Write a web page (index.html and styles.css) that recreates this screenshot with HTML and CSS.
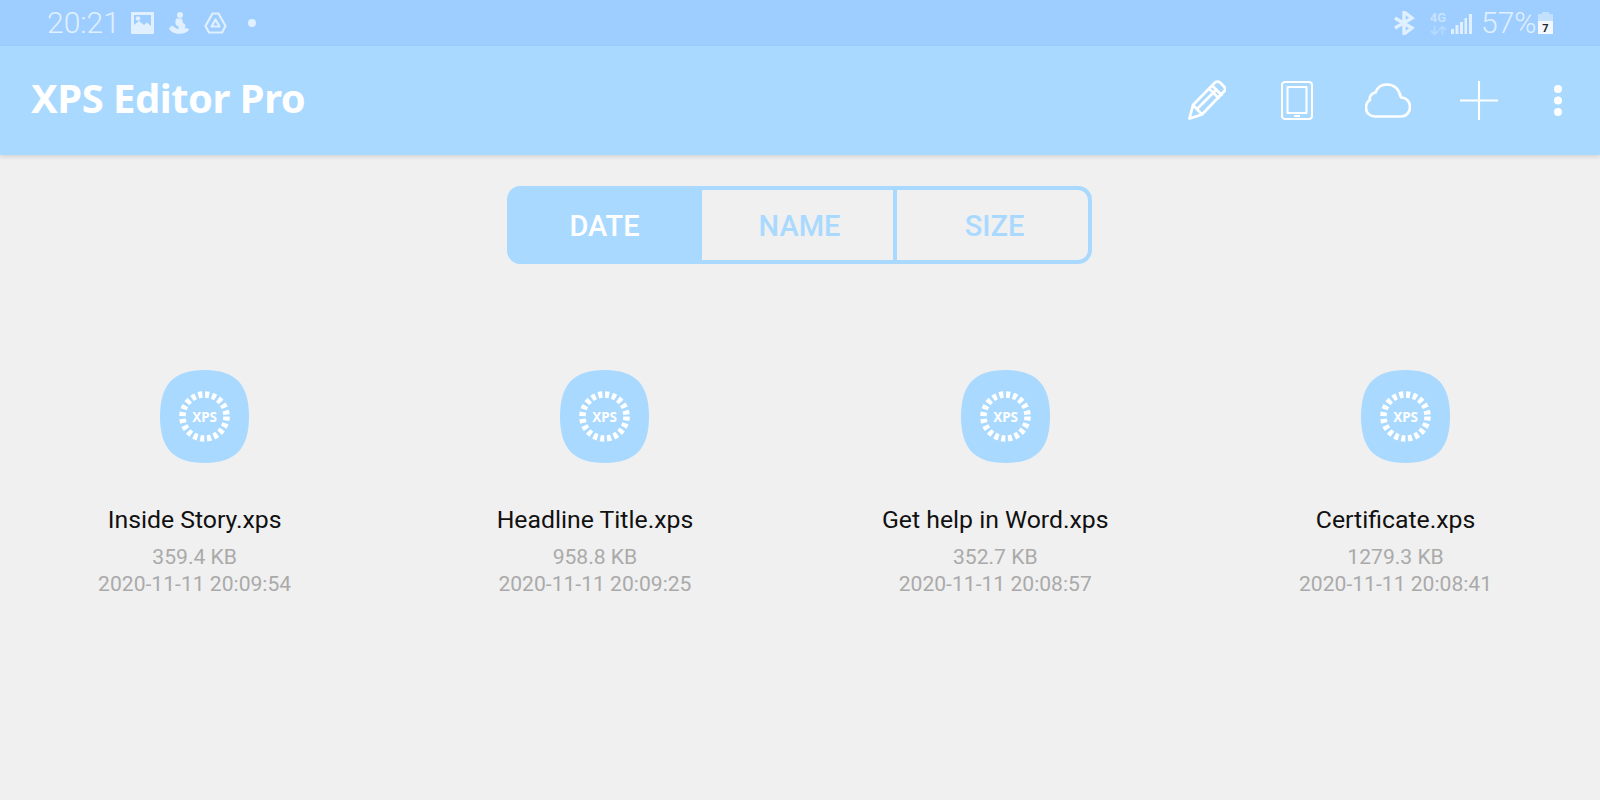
FILE: index.html
```html
<!DOCTYPE html>
<html lang="en">
<head>
<meta charset="utf-8">
<title>XPS Editor Pro</title>
<link rel="stylesheet" href="styles.css">
</head>
<body>
<div class="status">
  <span class="time">20:21</span>
  <svg class="s-image" width="23" height="22" viewBox="0 0 23 22"><path fill-rule="evenodd" d="M1 0H22a1 1 0 0 1 1 1V21a1 1 0 0 1-1 1H1a1 1 0 0 1-1-1V1a1 1 0 0 1 1-1ZM3 3V13L8 9L13 13L16 10.500L20 14V3Z"/><circle cx="7" cy="6.500" r="2.300"/></svg>
  <svg class="s-person" width="20" height="22" viewBox="0 0 20 22"><circle cx="11" cy="3" r="3"/><path d="M7 6.500H13L14 11C17 12 17 15 15.500 16.500C18 16 20 16 20 18C18 21 12 22.500 7 21.500C4 21 1 19 0 16.500L3 13.500L8 17C10 17 10.500 15 8.500 14C6 13 6 10 7 6.500Z"/></svg>
  <svg class="s-drive" width="23" height="22" viewBox="0 0 23 22"><path class="ln" d="M8.500 1.500H14.500L21.500 14L18 20.500H5L1.500 14Z"/><path class="ln" d="M11.500 7.500L15.500 14.500H7.500Z"/></svg>
  <span class="s-dot"></span>
  <div class="status-right">
    <svg class="s-bt" width="22" height="24" viewBox="0 0 22 24"><path class="bt" d="M2 7L19 17L11 23V1L19 7L2 17"/></svg>
    <div class="net"><span class="net-label">4G</span><svg width="17" height="9" viewBox="0 0 17 9"><path class="arrows" d="M4.500 0V8M1 5L4.500 8.500L8 5M12.500 9V1M9 4L12.500 .5L16 4"/></svg></div>
    <svg class="s-signal" width="21" height="20" viewBox="0 0 21 20"><path d="M0 15H3V20H0ZM4.500 11H7.500V20H4.500ZM9 8H12V20H9ZM13.500 4H16V20H13.500ZM18 0H21V20H18Z"/></svg>
    <span class="pct">57%</span>
    <svg class="s-batt" width="15" height="22" viewBox="0 0 15 22"><path class="batt-top" d="M4 0H11V2H15V9H0V2H4Z"/><rect y="9" width="15" height="13" fill="#f4f8fc"/><text x="7.500" y="20" class="batt-num">7</text></svg>
  </div>
</div>

<header class="appbar">
  <h1 class="title">XPS Editor Pro</h1>
  <div class="actions">
    <svg class="a-pencil" width="38" height="40" viewBox="0 0 38 40"><path class="w thick" d="M1.500 38.500L5 25L27 2.500C29 1 30 1 32 2.500L36 6.500C37.500 8 37.500 10 36 11.500L14 34.500ZM5 25L14 34.500M21 8.500L30.500 18M24 5.500L33.500 15M10 28L27 11"/></svg>
    <svg class="a-tablet" width="32" height="39" viewBox="0 0 32 39"><rect class="w" x="1" y="1" width="30" height="37" rx="3"/><rect class="w" x="6.500" y="6" width="19" height="26" /><rect x="13" y="34" width="6" height="2" fill="#fff"/></svg>
    <svg class="a-cloud" width="46" height="35" viewBox="0 0 46 35"><path class="w thick" d="M10 33.500H36C42 33.500 45 28.500 45 24C45 18.500 41 14.500 36 14.500C34 6 29 1.500 22 1.500C16 1.500 12 5 10.500 9.500C6.500 10 4 14 5 17C2 18.500 1 21.500 1 25C1 30 5 33.500 10 33.500Z"/></svg>
    <svg class="a-plus" width="38" height="39" viewBox="0 0 38 39"><path class="w" d="M19 0V39M0 19.500H38"/></svg>
    <svg class="a-more" width="8" height="31" viewBox="0 0 8 31"><circle cx="4" cy="4" r="4" fill="#fff"/><circle cx="4" cy="15.500" r="4" fill="#fff"/><circle cx="4" cy="27" r="4" fill="#fff"/></svg>
  </div>
</header>

<main>
  <div class="tabs">
    <div class="tab active">DATE</div>
    <div class="tab mid">NAME</div>
    <div class="tab">SIZE</div>
  </div>

  <div class="files">
    <article class="file">
      <svg class="doc" width="89" height="93" viewBox="0 0 89 93"><path class="blob" d="M44.500 0C75 0 89 14 89 46.500C89 79 75 93 44.500 93C14 93 0 79 0 46.500C0 14 14 0 44.500 0Z"/><circle class="ring" cx="44.500" cy="46.500" r="22"/><text class="doc-label" x="44.500" y="51.500">XPS</text></svg>
      <div class="file-text">
        <div class="file-name">Inside Story.xps</div>
        <div class="file-meta">359.4 KB</div>
        <div class="file-meta">2020-11-11 20:09:54</div>
      </div>
    </article>
    <article class="file">
      <svg class="doc" width="89" height="93" viewBox="0 0 89 93"><path class="blob" d="M44.500 0C75 0 89 14 89 46.500C89 79 75 93 44.500 93C14 93 0 79 0 46.500C0 14 14 0 44.500 0Z"/><circle class="ring" cx="44.500" cy="46.500" r="22"/><text class="doc-label" x="44.500" y="51.500">XPS</text></svg>
      <div class="file-text">
        <div class="file-name">Headline Title.xps</div>
        <div class="file-meta">958.8 KB</div>
        <div class="file-meta">2020-11-11 20:09:25</div>
      </div>
    </article>
    <article class="file">
      <svg class="doc" width="89" height="93" viewBox="0 0 89 93"><path class="blob" d="M44.500 0C75 0 89 14 89 46.500C89 79 75 93 44.500 93C14 93 0 79 0 46.500C0 14 14 0 44.500 0Z"/><circle class="ring" cx="44.500" cy="46.500" r="22"/><text class="doc-label" x="44.500" y="51.500">XPS</text></svg>
      <div class="file-text">
        <div class="file-name">Get help in Word.xps</div>
        <div class="file-meta">352.7 KB</div>
        <div class="file-meta">2020-11-11 20:08:57</div>
      </div>
    </article>
    <article class="file">
      <svg class="doc" width="89" height="93" viewBox="0 0 89 93"><path class="blob" d="M44.500 0C75 0 89 14 89 46.500C89 79 75 93 44.500 93C14 93 0 79 0 46.500C0 14 14 0 44.500 0Z"/><circle class="ring" cx="44.500" cy="46.500" r="22"/><text class="doc-label" x="44.500" y="51.500">XPS</text></svg>
      <div class="file-text">
        <div class="file-name">Certificate.xps</div>
        <div class="file-meta">1279.3 KB</div>
        <div class="file-meta">2020-11-11 20:08:41</div>
      </div>
    </article>
  </div>
</main>
</body>
</html>
```
FILE: styles.css
```css
* { box-sizing: border-box; }
html, body { margin: 0; height: 100%; }
body {
  background: #f0f0f0;
  font-family: Roboto, "Liberation Sans", sans-serif;
  overflow: hidden;
}
svg { display: block; flex: none; }

.status {
  height: 46px;
  background: #9ecdff;
  display: flex;
  align-items: center;
  padding-left: 47px;
  color: #e0f0ff;
  fill: #e0f0ff;
}
.time { font-size: 30px; font-weight: 300; line-height: 48px; width: 84px; }
.s-person { margin-left: 15px; }
.s-drive { margin-left: 15px; }
.s-dot { width: 8px; height: 8px; border-radius: 50%; background: #e0f0ff; margin-left: 21px; }
.ln { fill: none; stroke: #e0f0ff; stroke-width: 2.200; stroke-linejoin: round; }
.status-right { margin-left: auto; padding-right: 47px; display: flex; align-items: center; }
.bt { fill: none; stroke: #e0f0ff; stroke-width: 3.400; }
.net { margin-left: 14px; width: 18px; display: flex; flex-direction: column; align-items: center; gap: 2px; }
.net-label { font-size: 13px; font-weight: 700; line-height: 12px; color: #c8e2ff; }
.arrows { fill: none; stroke: #b4d9ff; stroke-width: 1.800; }
.s-signal { margin-left: 4px; margin-top: 2px; }
.pct { font-size: 30px; font-weight: 300; margin-left: 9px; width: 57px; line-height: 48px; }
.batt-top { fill: #c4e0ff; }
.batt-num { font: 700 11px Roboto, sans-serif; text-anchor: middle; fill: #1f2a33; }

.appbar {
  height: 109px;
  background: #a9d9ff;
  display: flex;
  align-items: center;
  padding: 0 38px 0 31px;
  box-shadow: 0 2px 4px rgba(0, 0, 0, .12);
  position: relative;
}
.title {
  margin: 0;
  font-family: "Noto Sans", sans-serif;
  font-size: 40px;
  font-weight: 700;
  letter-spacing: -.5px;
  color: #fff;
  padding-bottom: 6px;
}
.actions { margin-left: auto; display: flex; align-items: center; padding-bottom: 1px; }
.w { fill: none; stroke: #fff; stroke-width: 2.100; stroke-linejoin: round; stroke-linecap: round; }
.w.thick { stroke-width: 2.700; }
.a-tablet { margin-left: 55px; }
.a-cloud { margin-left: 52px; }
.a-plus { margin-left: 49px; }
.a-more { margin-left: 56px; }

main { padding-top: 31px; }
.tabs {
  width: 585px;
  height: 78px;
  margin-left: 507px;
  display: flex;
  border-radius: 14px;
  overflow: hidden;
  box-shadow: inset 0 0 0 4px #a9d9ff;
}
.tab {
  flex: 1;
  display: flex;
  align-items: center;
  justify-content: center;
  padding-top: 2px;
  font-size: 29px;
  font-weight: 500;
  color: #a9d9ff;
}
.tab.mid { box-shadow: inset -4px 0 0 #a9d9ff; }
.tab.active { background: #a9d9ff; color: #fff; }

.files { display: grid; grid-template-columns: repeat(4, 400.300px); padding-top: 106px; }
.file { display: flex; flex-direction: column; align-items: center; }
.doc { margin-left: 9px; }
.blob { fill: #a9d9ff; }
.ring { fill: none; stroke: #fff; stroke-width: 6.500; stroke-dasharray: 4.100 2.810; }
.doc-label { font: 700 13.500px "Noto Sans", sans-serif; fill: #fff; text-anchor: middle; letter-spacing: -.2px; }
.file-text { margin-right: 11px; margin-top: 41px; text-align: center; white-space: nowrap; }
.file-name { font-size: 24.800px; line-height: 32px; color: #111; margin-bottom: 7px; }
.file-meta { font-size: 21.100px; line-height: 27px; color: #aaa; }
```
